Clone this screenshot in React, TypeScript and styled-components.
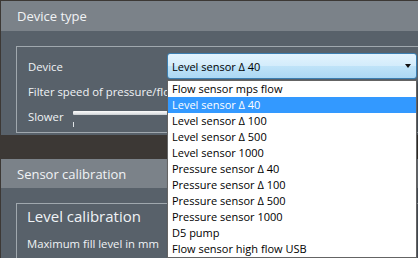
import React from 'react';
import styled, { createGlobalStyle } from 'styled-components';

const GlobalStyle = createGlobalStyle`
  html, body {
    margin: 0;
    padding: 0;
  }
  body {
    background: #3c3835;
    font-family: "Open Sans", "Liberation Sans", sans-serif;
  }
`;

const Screen = styled.div`
  width: 418px;
  height: 258px;
  overflow: hidden;
  box-sizing: border-box;
  padding: 1px 0 0 1px;
  display: flex;
  flex-direction: column;
  gap: 24px;
  background: #3c3835;
`;

const Panel = styled.section`
  width: 440px;
  display: flex;
  flex-direction: column;
  background: #58616a;
  flex-shrink: 0;
`;

const PanelHeader = styled.div<{ $h: number }>`
  height: ${(p) => p.$h}px;
  display: flex;
  align-items: center;
  padding-left: 16px;
  background: #7b8289;
  color: #f1f3f5;
  font-size: 13px;
`;

const PanelBody = styled.div<{ $h?: number }>`
  height: ${(p) => (p.$h ? `${p.$h}px` : 'auto')};
  box-sizing: border-box;
  padding: 15px 0 0 15px;
`;

const GroupBox = styled.div<{ $h: number; $pad: number }>`
  height: ${(p) => p.$h}px;
  box-sizing: border-box;
  border: 1px solid #a0a8ae;
  border-right: none;
  padding-left: ${(p) => p.$pad}px;
  color: #f0f3f6;
  font-size: 11.3px;
`;

const FormGrid = styled.div`
  display: grid;
  grid-template-columns: 139px 250px;
  grid-template-rows: 26px 24px 29px;
  padding-top: 6px;
`;

const Label = styled.div`
  display: flex;
  align-items: center;
  white-space: nowrap;
  overflow: hidden;
`;

const Combo = styled.div`
  position: relative;
  box-sizing: border-box;
  height: 26px;
  display: flex;
  align-items: center;
  padding: 0 4px 0 4px;
  border: 1px solid #3c7fb1;
  border-radius: 3px;
  background: linear-gradient(#e3f3fd 0%, #d3ecfb 50%, #bfe3f8 51%, #acd8f4 100%);
  color: #000;
  font-size: 11px;
`;

const Arrow = styled.span`
  margin-left: auto;
  margin-right: 1px;
  width: 0;
  height: 0;
  border-left: 3.5px solid transparent;
  border-right: 3.5px solid transparent;
  border-top: 4px solid #101010;
`;

const DropList = styled.ul`
  position: absolute;
  z-index: 10;
  top: 26px;
  left: -1px;
  width: 250px;
  box-sizing: border-box;
  margin: 0;
  padding: 0;
  list-style: none;
  background: #fff;
  border: 1px solid #646464;
  box-shadow: 2px 2px 3px rgba(0, 0, 0, 0.3);
`;

const DropItem = styled.li<{ $selected?: boolean }>`
  height: 16px;
  line-height: 16px;
  padding-left: 4px;
  font-size: 11px;
  white-space: nowrap;
  color: ${(p) => (p.$selected ? '#fff' : '#000')};
  background: ${(p) => (p.$selected ? '#3399ff' : 'transparent')};
`;

const SliderRow = styled.div`
  grid-column: 1 / span 2;
  display: flex;
  align-items: flex-start;
  padding-top: 7px;
`;

const SliderLabel = styled.span`
  width: 45px;
  line-height: 14px;
`;

const Track = styled.div`
  position: relative;
  flex: 1;
  height: 4px;
  margin-top: 1px;
  border-radius: 1px;
  background: linear-gradient(#fafafa, #e4e6e8 60%, #c8ccd0);

  &::after {
    content: '';
    position: absolute;
    left: 0;
    top: 11px;
    width: 1px;
    height: 5px;
    background: #dfe3e6;
  }
`;

const GroupTitle = styled.div`
  padding-top: 2px;
  line-height: 21px;
  font-size: 15px;
`;

const FieldLabel = styled.div`
  margin-top: 9px;
  line-height: 16px;
`;

const devices = [
  'Flow sensor mps flow',
  'Level sensor Δ 40',
  'Level sensor Δ 100',
  'Level sensor Δ 500',
  'Level sensor 1000',
  'Pressure sensor Δ 40',
  'Pressure sensor Δ 100',
  'Pressure sensor Δ 500',
  'Pressure sensor 1000',
  'D5 pump',
  'Flow sensor high flow USB',
];

const App: React.FC = () => {
  const selected = 'Level sensor Δ 40';

  return (
    <>
      <GlobalStyle />
      <Screen>
        <Panel>
          <PanelHeader $h={30}>Device type</PanelHeader>
          <PanelBody $h={104}>
            <GroupBox $h={87} $pad={11}>
              <FormGrid>
                <Label>Device</Label>
                <Combo>
                  {selected}
                  <Arrow />
                  <DropList>
                    {devices.map((d) => (
                      <DropItem key={d} $selected={d === selected}>
                        {d}
                      </DropItem>
                    ))}
                  </DropList>
                </Combo>
                <Label>Filter speed of pressure/flow sensors</Label>
                <div />
                <SliderRow>
                  <SliderLabel>Slower</SliderLabel>
                  <Track />
                </SliderRow>
              </FormGrid>
            </GroupBox>
          </PanelBody>
        </Panel>
        <Panel>
          <PanelHeader $h={29}>Sensor calibration</PanelHeader>
          <PanelBody>
            <GroupBox $h={80} $pad={10}>
              <GroupTitle>Level calibration</GroupTitle>
              <FieldLabel>Maximum fill level in mm</FieldLabel>
            </GroupBox>
          </PanelBody>
        </Panel>
      </Screen>
    </>
  );
};

export default App;
